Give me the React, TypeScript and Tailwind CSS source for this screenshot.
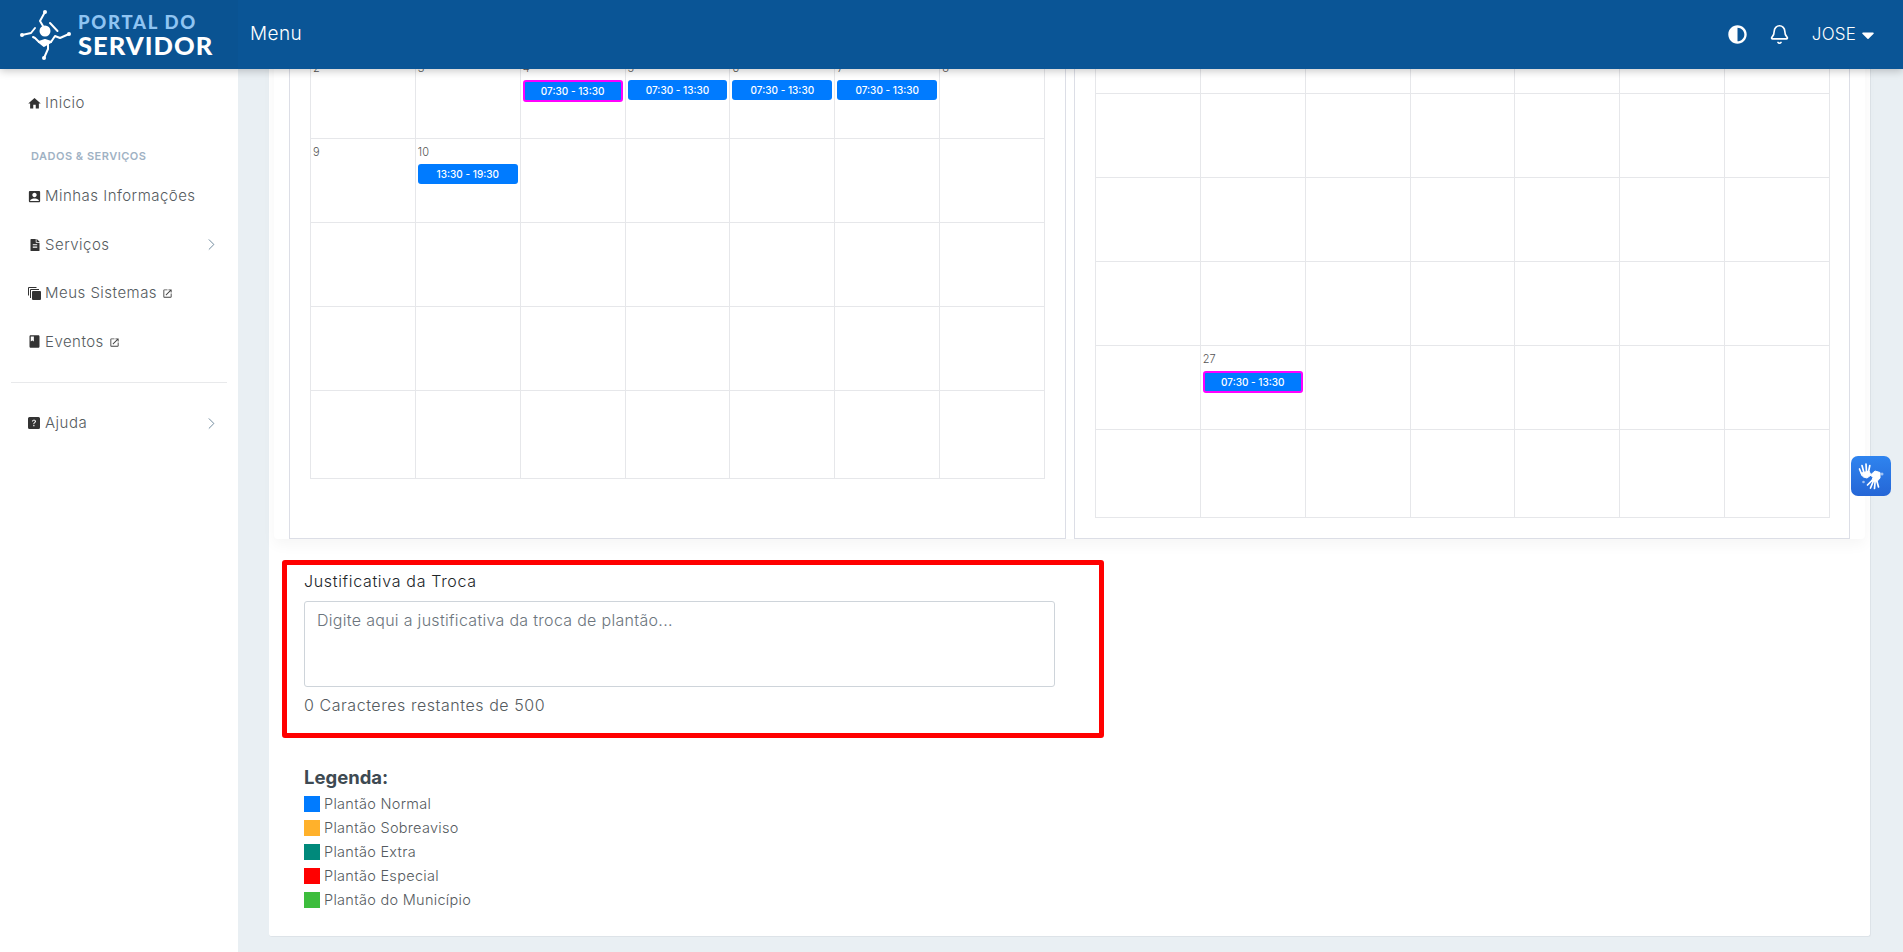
import React from "react";
import { ChevronRight, Bell } from "lucide-react";
import { FaFileAlt, FaCaretDown, FaAdjust } from "react-icons/fa";
import { MdAccountBox, MdOpenInNew, MdHome, MdBook } from "react-icons/md";
import { BsQuestionSquareFill } from "react-icons/bs";

type Shift = { time: string; marked?: boolean };
type Cell = { day?: string; shift?: Shift };

const leftRows: Cell[][] = [
  [
    { day: "2" },
    { day: "3" },
    { day: "4", shift: { time: "07:30 - 13:30", marked: true } },
    { day: "5", shift: { time: "07:30 - 13:30" } },
    { day: "6", shift: { time: "07:30 - 13:30" } },
    { day: "7", shift: { time: "07:30 - 13:30" } },
    { day: "8" },
  ],
  [{ day: "9" }, { day: "10", shift: { time: "13:30 - 19:30" } }, {}, {}, {}, {}, {}],
  [{}, {}, {}, {}, {}, {}, {}],
  [{}, {}, {}, {}, {}, {}, {}],
  [{}, {}, {}, {}, {}, {}, {}],
];

const rightRows: Cell[][] = [
  [{}, {}, {}, {}, {}, {}, {}],
  [{}, {}, {}, {}, {}, {}, {}],
  [{}, {}, {}, {}, {}, {}, {}],
  [{}, {}, {}, {}, {}, {}, {}],
  [{}, { day: "27", shift: { time: "07:30 - 13:30", marked: true } }, {}, {}, {}, {}, {}],
  [{}, {}, {}, {}, {}, {}, {}],
];

const legend = [
  { label: "Plantão Normal", color: "bg-[#007bff]" },
  { label: "Plantão Sobreaviso", color: "bg-[#ffb12b]" },
  { label: "Plantão Extra", color: "bg-[#00897b]" },
  { label: "Plantão Especial", color: "bg-[#ff0000]" },
  { label: "Plantão do Município", color: "bg-[#3dbd3d]" },
];

function Logo() {
  return (
    <svg width="56" height="52" viewBox="0 0 56 52" fill="none" stroke="white" strokeWidth="2" strokeLinecap="round" strokeLinejoin="round">
      <circle cx="25" cy="22" r="5.500" fill="white" stroke="none" />
      <path d="M25 3 L20 12 L23 17" />
      <path d="M30 14 L37.500 22" />
      <path d="M2 26 L11 24 L15 19" />
      <path d="M49 25 L40 29 L35 27 L31 33 L25 31 L19 33 L15 29 L13 28" />
      <path d="M19 33 L24 37 L31 33 Z" fill="white" />
      <path d="M24 49 L28 40 L28 35" />
      <circle cx="25" cy="3" r="2" fill="white" stroke="none" />
      <circle cx="2" cy="26" r="2" fill="white" stroke="none" />
      <circle cx="49" cy="25" r="2" fill="white" stroke="none" />
      <circle cx="24" cy="49" r="2" fill="white" stroke="none" />
    </svg>
  );
}

function HandsIcon() {
  return (
    <svg width="28" height="28" viewBox="0 0 28 28" fill="none" stroke="white" strokeLinecap="round">
      {/* mao de tras */}
      <g strokeWidth="1.700">
        <path d="M5 13 L2.500 7" />
        <path d="M7 11 L5 3.500" />
        <path d="M9.500 10 L9 2" />
        <path d="M11.500 10 L12.800 3.500" />
      </g>
      <path d="M4.500 11 L12 9 L14 13 L10 16 L6.500 15 Z" fill="white" strokeWidth="1" />
      {/* mao da frente */}
      <path d="M13.500 13 L18 9 L23 10.500 L23 16 L19.500 20 L14.500 19 L16 15.500 Z" fill="white" strokeWidth="1" />
      <g strokeWidth="1.700">
        <path d="M14.500 19 L10.500 23" />
        <path d="M16 20 L13.500 26" />
        <path d="M18 20.500 L17.500 26.500" />
        <path d="M20 19.500 L21.500 25" />
      </g>
      <circle cx="25" cy="12" r="1.500" fill="white" stroke="none" opacity="0.55" />
      <circle cx="6.500" cy="20" r="1.300" fill="white" stroke="none" opacity="0.55" />
    </svg>
  );
}

function CopyIcon() {
  return (
    <svg width="13" height="13" viewBox="0 0 13 13">
      <rect x="4" y="4" width="9" height="9" rx="1" fill="currentColor" />
      <path d="M2.500 11 V2.500 H11" fill="none" stroke="currentColor" strokeWidth="1" />
      <path d="M0.500 8.500 V0.500 H8.500" fill="none" stroke="currentColor" strokeWidth="1" />
    </svg>
  );
}

function NavItem({
  icon,
  label,
  external,
  chevron,
}: {
  icon: React.ReactNode;
  label: string;
  external?: boolean;
  chevron?: boolean;
}) {
  return (
    <div className="flex h-[48.500px] items-center pl-[28px] pr-[17px] text-[#555b60]">
      <span className="flex w-[17px] shrink-0 text-[#333]">{icon}</span>
      <span className="text-[15px] font-light tracking-[0.48px]">{label}</span>
      {external && <MdOpenInNew className="ml-[5px] mt-px text-[#444]" size={11} />}
      {chevron && <ChevronRight className="ml-auto text-[#5c7a90]" size={19} strokeWidth={1.1} />}
    </div>
  );
}

function ShiftPill({ shift }: { shift: Shift }) {
  return (
    <div
      className={`mx-[2px] flex h-[20px] items-center justify-center rounded-[3px] bg-[#007bff] text-[10px] font-medium text-white ${
        shift.marked ? "h-[22px] border-2 border-[#ff00ff]" : ""
      }`}
    >
      {shift.time}
    </div>
  );
}

function MonthGrid({ rows }: { rows: Cell[][] }) {
  return (
    <div className="border-t border-l border-[#e6e7ea]">
      {rows.map((row, r) => (
        <div key={r} className={`grid grid-cols-7 ${r === rows.length - 1 ? "h-[88px]" : "h-[84px]"}`}>
          {row.map((cell, c) => (
            <div key={c} className="min-w-0 border-r border-b border-[#e6e7ea]">
              {cell.day && <div className="h-[25px] pl-[2px] pt-[6px] text-[11px] font-light leading-[15px] text-[#555]">{cell.day}</div>}
              {cell.shift && <ShiftPill shift={cell.shift} />}
            </div>
          ))}
        </div>
      ))}
    </div>
  );
}

export default function App() {
  return (
    <div className="relative h-[952px] overflow-hidden bg-[#e9eff3] font-['Inter',sans-serif]">
      {/* barra do topo fica por cima do conteudo rolado */}
      <header className="absolute inset-x-0 top-0 z-20 flex h-[69px] items-center bg-[#0a5596] text-white shadow-[0_2px_8px_rgba(0,0,0,0.22)]">
        <div className="flex h-full w-[238px] shrink-0 items-center bg-[#0a5392] pl-[20px]">
          <Logo />
          <div className="ml-[2px] mt-[2px] flex flex-col font-['Lato',sans-serif] font-black">
            <span className="text-[18.500px] leading-[19px] tracking-[1.7px] text-[#8fc4f2]">PORTAL DO</span>
            <span className="text-[25.500px] leading-[26px] tracking-[1.05px]">SERVIDOR</span>
          </div>
        </div>
        <span className="ml-[12px] text-[19px] font-light tracking-[0.4px]">Menu</span>
        <div className="ml-auto flex items-center pr-[25px]">
          <FaAdjust size={19} />
          <Bell className="ml-[22px]" size={21} strokeWidth={1.9} />
          <span className="ml-[22px] text-[17px] font-light tracking-[0.2px]">JOSE</span>
          <FaCaretDown className="ml-[2px]" size={20} />
        </div>
      </header>

      <div className="flex h-full">
        <aside className="h-full w-[238px] shrink-0 bg-white pt-[79px]">
          <NavItem icon={<MdHome size={15} className="-ml-[1px]" />} label="Inicio" />
          <div className="flex h-[29px] items-center pl-[31px] pt-[28px] text-[11px] font-semibold tracking-[0.5px] text-[#9fb2c4]">
            DADOS &amp; SERVIÇOS
          </div>
          <div className="h-[15.500px]" />
          <NavItem icon={<MdAccountBox size={15} className="-ml-[1px]" />} label="Minhas Informações" />
          <NavItem icon={<FaFileAlt size={12} className="ml-[1px]" />} label="Serviços" chevron />
          <NavItem icon={<CopyIcon />} label="Meus Sistemas" external />
          <NavItem icon={<MdBook size={15} className="-ml-[1px]" />} label="Eventos" external />
          <div className="mx-[11px] my-[16px] border-t border-[#e8e9eb]" />
          <NavItem icon={<BsQuestionSquareFill size={12} />} label="Ajuda" chevron />
        </aside>

        <main className="min-w-0 flex-1 pl-[31px] pr-[32px]">
          <div className="-mt-[100px] h-[1037px] rounded-[3px] border-r border-b border-[#dde3e8] bg-white">
            <div className="mx-[5px] flex gap-[8px] rounded-b-[4px] bg-white px-[15px] shadow-[0_6px_14px_rgba(0,0,0,0.04)]">
              <section className="flex-1 border border-t-0 border-[#dcdee6] px-[20px] pt-[154px] pb-[59px]">
                <MonthGrid rows={leftRows} />
              </section>
              <section className="flex-1 border border-t-0 border-[#dcdee6] pl-[20px] pr-[19px] pt-[109px] pb-[20px]">
                <MonthGrid rows={rightRows} />
              </section>
            </div>

            <div className="ml-[13px] mt-[21px] h-[178px] w-[822px] rounded-[3px] border-[5px] border-[#ff0000] px-[17px] pt-[4px]">
              <div className="text-[16px] font-light leading-[24px] tracking-[0.67px] text-[#212529]">Justificativa da Troca</div>
              <textarea
                readOnly
                className="mt-[8px] block h-[86px] w-[751px] resize-none rounded-[3px] border border-[#ced4da] px-[12px] py-[6px] text-[16px] font-light tracking-[0.3px] text-[#495057] placeholder:text-[#6c757d]"
                placeholder="Digite aqui a justificativa da troca de plantão..."
              />
              <div className="mt-[6px] text-[16px] font-light tracking-[0.55px] text-[#555b60]">0 Caracteres restantes de 500</div>
            </div>

            <div className="ml-[35px] mt-[27px]">
              <div className="text-[18.500px] font-bold leading-[24px] text-[#3e4a52]">Legenda:</div>
              <ul className="mt-[7px] flex flex-col gap-[8px]">
                {legend.map((item) => (
                  <li key={item.label} className="flex h-[16px] items-center">
                    <span className={`h-[16px] w-[16px] ${item.color}`} />
                    <span className="ml-[4px] text-[14.500px] font-light tracking-[0.3px] text-[#555b60]">{item.label}</span>
                  </li>
                ))}
              </ul>
            </div>
          </div>
        </main>
      </div>

      {/* botao flutuante do VLibras */}
      <div className="absolute left-[1851px] top-[456px] z-10 flex h-[40px] w-[40px] items-center justify-center rounded-[7px] bg-gradient-to-b from-[#2f84ef] to-[#2566d6]">
        <HandsIcon />
      </div>
    </div>
  );
}
